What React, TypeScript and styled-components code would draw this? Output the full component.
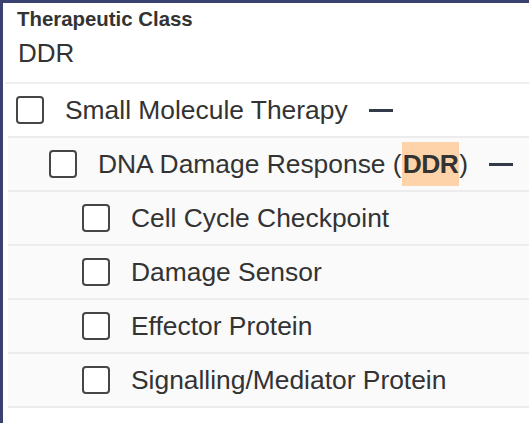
import React from "react";
import styled, { createGlobalStyle } from "styled-components";

const Global = createGlobalStyle`
  html, body { margin: 0; padding: 0; background: #ffffff; }
  body { font-family: "Liberation Sans", Arial, sans-serif; color: #333333; }
`;

const Panel = styled.div`
  width: 529px;
  height: 423px;
  box-sizing: border-box;
  border-top: 3px solid #3a4270;
  border-left: 3px solid #3a4270;
  background: #ffffff;
  overflow: hidden;
`;

const Header = styled.div`
  display: flex;
  flex-direction: column;
  gap: 7px;
  padding: 5px 0 14px 14px;
  border-bottom: 2px solid #eeeeee;
  margin-left: 2px;
`;

const Label = styled.div`
  font-size: 20.4px;
  font-weight: 700;
  line-height: 23px;
  color: #333333;
  margin-left: -2px;
`;

const Value = styled.div`
  font-size: 26px;
  line-height: 30px;
  color: #333333;
  margin-left: -1px;
`;

const List = styled.div`
  display: flex;
  flex-direction: column;
  margin-left: 5px;
`;

const Row = styled.div<{ $level: number; $shaded: boolean }>`
  display: flex;
  align-items: center;
  height: 52px;
  border-bottom: 2px solid #ececec;
  padding-left: ${(p) => 8 + p.$level * 33}px;
  background: ${(p) => (p.$shaded ? "#fafafa" : "#ffffff")};
`;

const Box = styled.span`
  display: block;
  width: 28px;
  height: 28px;
  box-sizing: border-box;
  border: 2.5px solid #464646;
  border-radius: 4px;
  background: #ffffff;
  flex: none;
`;

const Text = styled.span`
  margin-left: 21px;
  font-size: 26.4px;
  line-height: 30px;
  color: #333333;
  white-space: nowrap;
  display: flex;
  align-items: center;
`;

const Mark = styled.mark`
  display: inline-block;
  background: #fed3aa;
  color: #333333;
  font-weight: 700;
  height: 44px;
  line-height: 44px;
  padding: 0 1px 0 1px;
  letter-spacing: -0.5px;
`;

const Collapse = styled.span`
  display: block;
  width: 24px;
  height: 3px;
  background: #333a4a;
  margin-left: 21px;
  flex: none;
`;

type Item = { level: number; label: React.ReactNode; open?: boolean };

const items: Item[] = [
  { level: 0, label: "Small Molecule Therapy", open: true },
  {
    level: 1,
    label: (
      <>
        DNA Damage Response (<Mark>DDR</Mark>)
      </>
    ),
    open: true,
  },
  { level: 2, label: "Cell Cycle Checkpoint" },
  { level: 2, label: "Damage Sensor" },
  { level: 2, label: "Effector Protein" },
  { level: 2, label: "Signalling/Mediator Protein" },
];

export default function App() {
  return (
    <>
      <Global />
      <Panel>
        <Header>
          <Label>Therapeutic Class</Label>
          <Value>DDR</Value>
        </Header>
        <List>
          {items.map((it, i) => (
            <Row key={i} $level={it.level} $shaded={i > 0}>
              <Box />
              <Text>{it.label}</Text>
              {it.open && <Collapse />}
            </Row>
          ))}
        </List>
      </Panel>
    </>
  );
}
